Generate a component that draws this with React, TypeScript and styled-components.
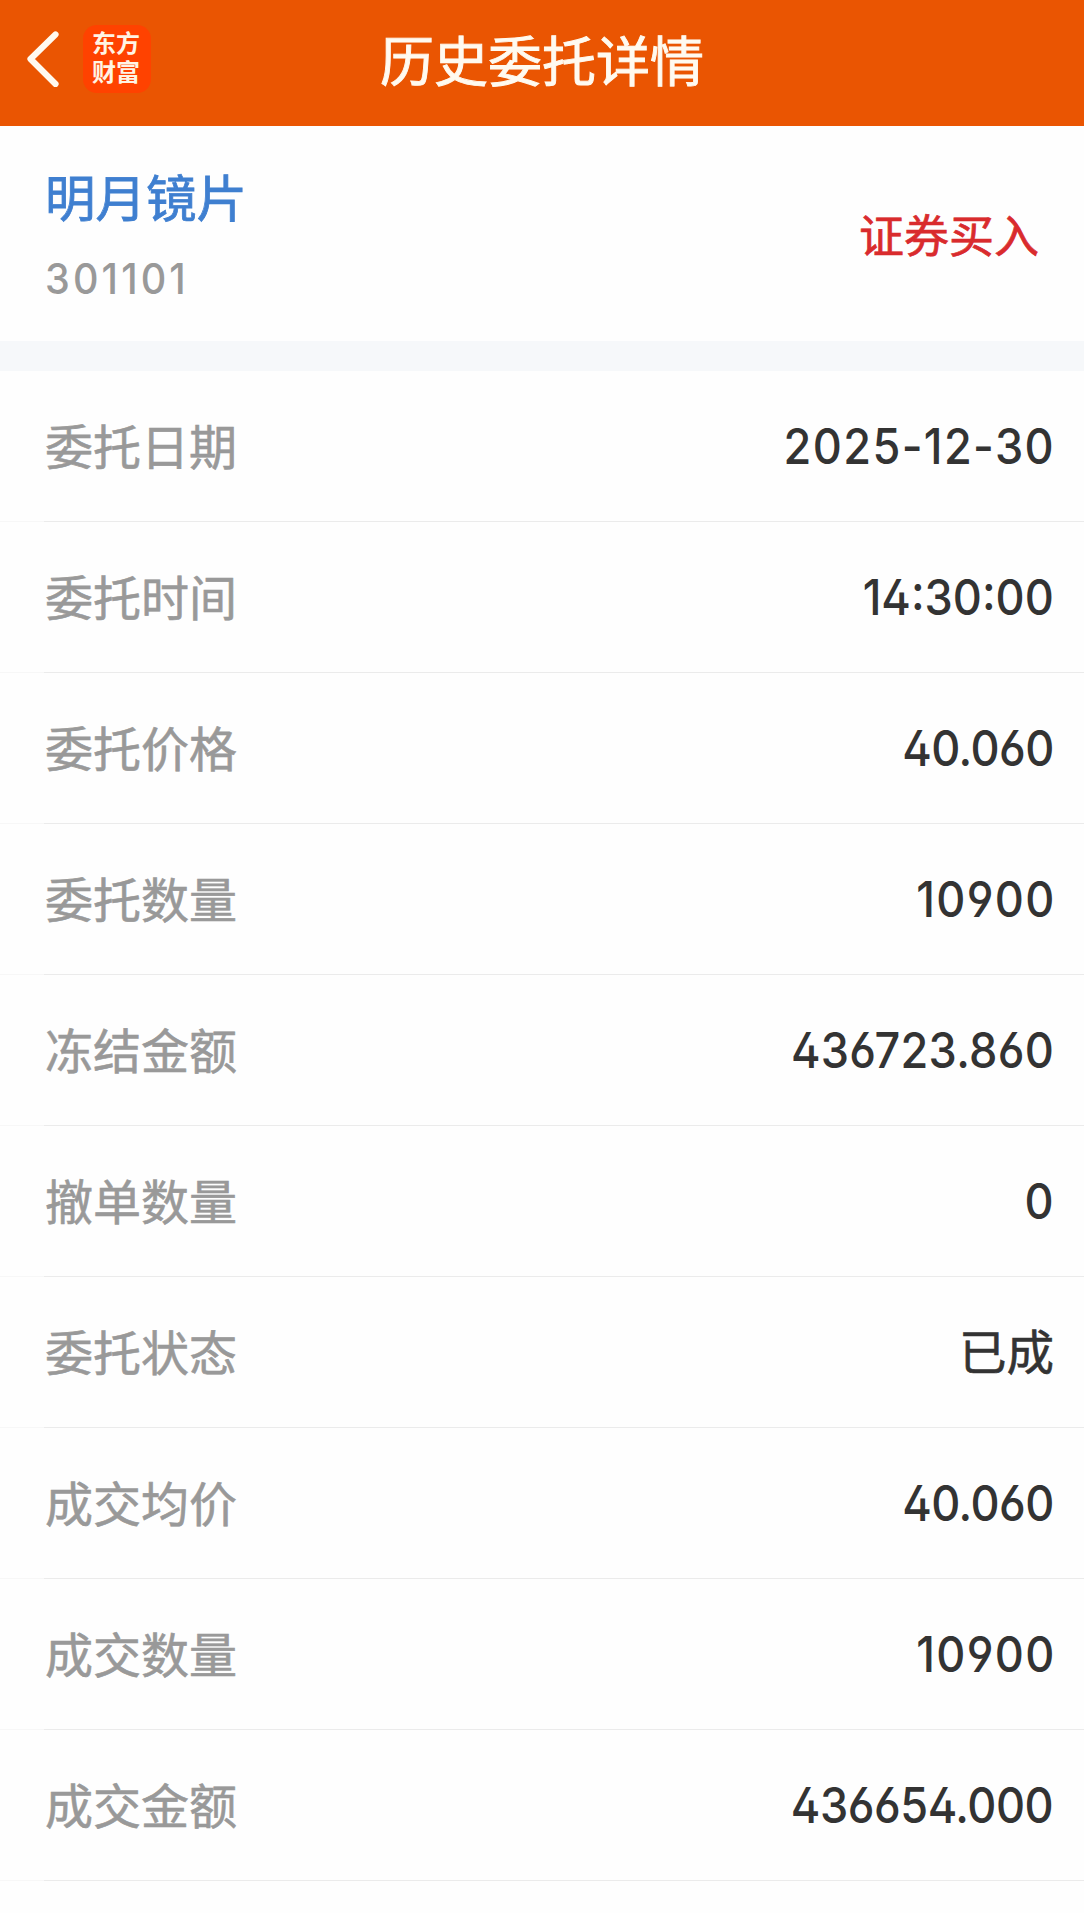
import React from 'react';
import styled, { createGlobalStyle } from 'styled-components';

const GlobalStyle = createGlobalStyle`
  * { box-sizing: border-box; }
  body {
    margin: 0;
    background: #fefefe;
    font-family: "Noto Sans CJK SC", "Noto Sans", sans-serif;
  }
`;

const Page = styled.main`
  display: flex;
  flex-direction: column;
  width: 1084px;
  height: 1913px;
  overflow: hidden;
  background: #fefefe;
`;

const Header = styled.header`
  display: grid;
  grid-template-columns: 1fr auto 1fr;
  align-items: center;
  height: 126px;
  padding: 0 26px 9px;
  background: #ea5502;
`;

const HeaderLeft = styled.div`
  display: flex;
  align-items: center;
  gap: 24px;
`;

const BackIcon = styled.svg`
  display: block;
  width: 33px;
  height: 56px;
`;

const Logo = styled.div`
  display: flex;
  flex-direction: column;
  align-items: center;
  justify-content: center;
  width: 68px;
  height: 68px;
  padding: 0 2px 5px 0;
  border-radius: 14px;
  background: #ff4200;
  color: #fff4e4;
  font-size: 24px;
  font-weight: 700;
  line-height: 29px;
`;

const Title = styled.h1`
  margin: 0;
  color: #fffaf0;
  font-size: 54px;
  font-weight: 400;
  line-height: 80px;
  -webkit-text-stroke: 0.9px currentColor;
`;

const Summary = styled.section`
  display: flex;
  align-items: center;
  justify-content: space-between;
  height: 215px;
  padding: 0 45px 0 45px;
`;

const Stock = styled.div`
  display: flex;
  flex-direction: column;
  gap: 9px;
  padding-top: 5px;
`;

const StockName = styled.div`
  color: #3f7fd0;
  font-size: 50.5px;
  font-weight: 400;
  line-height: 74px;
  -webkit-text-stroke: 0.8px currentColor;
`;

const Digits = styled.span<{ $size: number; $tracking?: number; $origin?: string }>`
  display: block;
  font-family: Inter, "Noto Sans CJK SC", sans-serif;
  font-size: ${(p) => p.$size}px;
  font-weight: 500;
  font-feature-settings: "cv02", "cv03", "cv04";
  letter-spacing: ${(p) => p.$tracking || 0}px;
  margin-right: ${(p) => -(p.$tracking || 0)}px;
  transform: scaleX(0.92);
  transform-origin: ${(p) => p.$origin || 'right'} center;
`;

const StockCode = styled.div`
  color: #999;
  line-height: 74px;
`;

const Direction = styled.div`
  color: #d92b2d;
  font-size: 45px;
  font-weight: 400;
  line-height: 66px;
  -webkit-text-stroke: 0.7px currentColor;
`;

const Band = styled.div`
  height: 30px;
  background: #f6f8fa;
`;

const List = styled.dl`
  margin: 0;
`;

const Row = styled.div`
  display: flex;
  align-items: center;
  justify-content: space-between;
  height: 151px;
  padding: 0 30px 4px 45px;
  border-bottom: 1px solid;
  border-image: linear-gradient(to right, #f7f7f7 45px, #ebebeb 45px) 1;
`;

const Label = styled.dt`
  color: #999;
  font-size: 48px;
  font-weight: 400;
  line-height: 70px;
  -webkit-text-stroke: 0.6px currentColor;
`;

const Value = styled.dd`
  margin: 0;
  color: #333;
  font-size: 47.5px;
  font-weight: 400;
  line-height: 70px;
  -webkit-text-stroke: 0.6px currentColor;
`;

const NumberValue = styled.dd`
  margin: 0;
  padding-top: 6px;
  color: #333;
  line-height: 70px;
`;

const rows: { label: string; value: string; tracking?: number }[] = [
  { label: '委托日期', value: '2025-12-30', tracking: 1.5 },
  { label: '委托时间', value: '14:30:00', tracking: 0 },
  { label: '委托价格', value: '40.060', tracking: -0.6 },
  { label: '委托数量', value: '10900', tracking: 1.5 },
  { label: '冻结金额', value: '436723.860', tracking: 0.3 },
  { label: '撤单数量', value: '0', tracking: 0 },
  { label: '委托状态', value: '已成' },
  { label: '成交均价', value: '40.060', tracking: -0.6 },
  { label: '成交数量', value: '10900', tracking: 1.5 },
  { label: '成交金额', value: '436654.000', tracking: -0.5 },
];

export default function App() {
  return (
    <>
      <GlobalStyle />
      <Page>
        <Header>
          <HeaderLeft>
            <BackIcon viewBox="0 0 33 56" fill="none" stroke="#fffaf0" strokeWidth="6.2">
              <path d="M29.5 3.5 L4.5 28 L29.5 53" strokeLinejoin="round" strokeLinecap="round" />
            </BackIcon>
            <Logo>
              <span>东方</span>
              <span>财富</span>
            </Logo>
          </HeaderLeft>
          <Title>历史委托详情</Title>
        </Header>
        <Summary>
          <Stock>
            <StockName>明月镜片</StockName>
            <StockCode>
              <Digits $size={43} $tracking={3.4} $origin="left">301101</Digits>
            </StockCode>
          </Stock>
          <Direction>证券买入</Direction>
        </Summary>
        <Band />
        <List>
          {rows.map((row) => (
            <Row key={row.label}>
              <Label>{row.label}</Label>
              {row.tracking === undefined ? (
                <Value>{row.value}</Value>
              ) : (
                <NumberValue>
                  <Digits $size={49} $tracking={row.tracking}>{row.value}</Digits>
                </NumberValue>
              )}
            </Row>
          ))}
        </List>
      </Page>
    </>
  );
}
